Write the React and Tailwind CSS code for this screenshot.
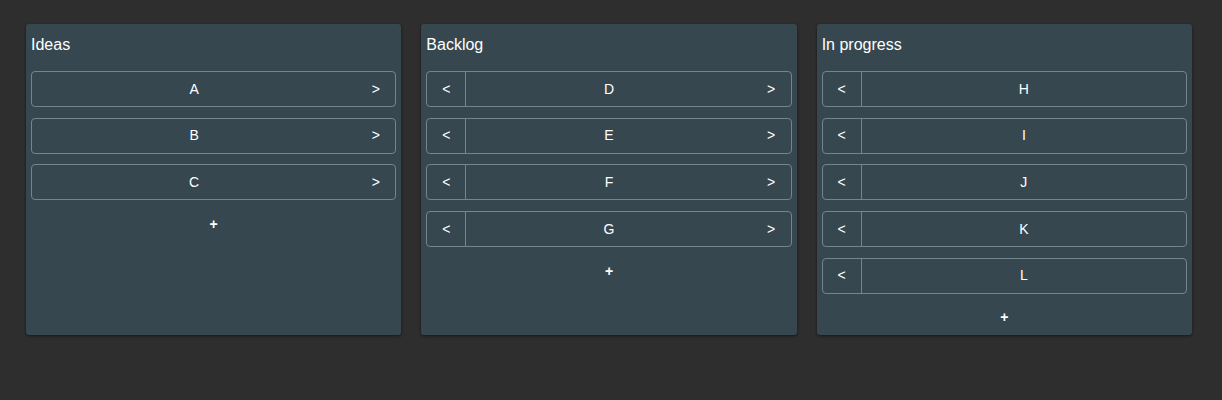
import React from "react";

const columns = [
  { title: "Ideas", items: ["A", "B", "C"], left: false, right: true },
  { title: "Backlog", items: ["D", "E", "F", "G"], left: true, right: true },
  { title: "In progress", items: ["H", "I", "J", "K", "L"], left: true, right: false },
];

function Card({ label, left, right }) {
  return (
    <div className="flex h-[36px] rounded-[4px] border border-[#74858e] bg-[#37474f] text-[14px] text-white">
      {left && (
        <button className="w-[39px] shrink-0 border-r border-[#74858e] flex items-center justify-center">
          &lt;
        </button>
      )}
      <div className="flex-1 flex items-center justify-center">{label}</div>
      {right && (
        <button className="w-[39px] shrink-0 flex items-center justify-center">&gt;</button>
      )}
    </div>
  );
}

export default function App() {
  return (
    <div
      className="w-[1222px] h-[400px] bg-[#2e2e2e] pl-[26px] pr-[30px] pt-[24px]"
      style={{ fontFamily: '"Liberation Sans", Arial, sans-serif' }}
    >
      <div className="grid grid-cols-3 gap-[20px] items-stretch">
        {columns.map((col) => (
          <div
            key={col.title}
            className="bg-[#37474f] rounded-[3px] shadow-[0_1px_3px_rgba(0,0,0,0.5)] px-[5px] pt-[12px] pb-[3px] flex flex-col"
          >
            <div className="text-[16px] leading-[18px] text-white mb-[17px]">{col.title}</div>
            <div className="flex flex-col gap-[10.7px]">
              {col.items.map((it) => (
                <Card key={it} label={it} left={col.left} right={col.right} />
              ))}
            </div>
            <button className="mt-[10px] h-[28px] flex items-center justify-center text-[14px] font-bold text-white">
              +
            </button>
          </div>
        ))}
      </div>
    </div>
  );
}
